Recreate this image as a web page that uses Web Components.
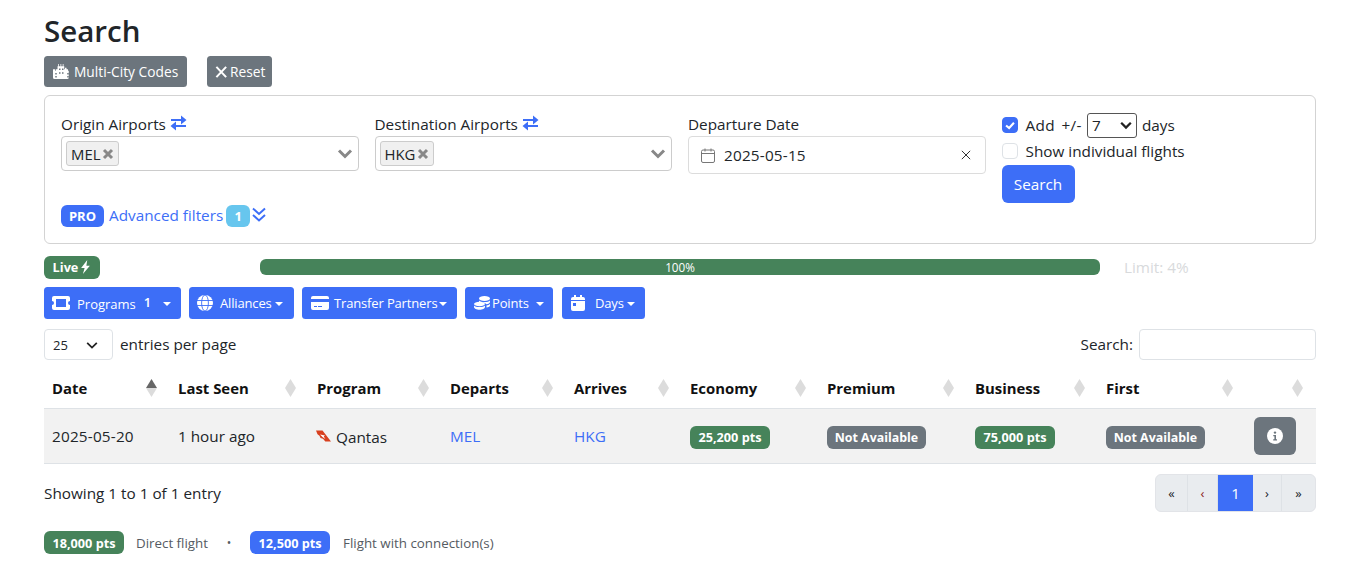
<!DOCTYPE html>
<html><head><meta charset="utf-8">
<style>
html,body{margin:0;padding:0;background:#fff}
body{font:15.3px/24px "Open Sans","Noto Sans",sans-serif;color:#212529}
</style></head>
<body>
<search-page></search-page>
<script>
const I={
city:'<svg viewBox="0 0 24 20" width="18" height="15" fill="currentColor"><path d="M0 7h3v2h1V7h2V3h1V0h1v3h2V0h1v3h2V0h1v3h1v4h1V5h2v2h2v2h1v9a2 2 0 0 1-2 2H2a2 2 0 0 1-2-2z"/><path fill="#6c757d" d="M8 6h2v2H8zM12 6h2v2h-2zM8 11h2v2H8zM12 11h2v2h-2zM3 12h2v2H3zM3 16h2v2H3zM19 12h2v2h-2zM19 16h2v2h-2z"/></svg>',
x:'<svg viewBox="0 0 14 14" width="13" height="14" fill="none" stroke="currentColor" stroke-width="2.2"><path d="M1.500 1.500 12 12.500M12 1.500 1.500 12.500"/></svg>',
swap:'<svg viewBox="0 0 17 16" width="17" height="16" fill="currentColor"><path d="M1 4h11v2H1zM5 10h11v2H5z"/><path d="M11 0.500 16.500 5 11 9.500zM6 6.500.5 11 6 15.500z"/></svg>',
down:'<svg viewBox="0 0 16 16" width="16" height="16" fill="none" stroke="currentColor" stroke-width="2"><path d="M2 1.500 8 7l6-5.500M2 8 8 13.500 14 8"/></svg>',
bolt:'<svg viewBox="0 0 12 16" width="11" height="14" fill="currentColor"><path d="M8 0 1 9h4l-2 7 8-9.500H7z"/></svg>',
ticket:'<svg viewBox="0 0 18 14" width="18" height="14" fill="currentColor"><path fill-rule="evenodd" d="M2 0h14a2 2 0 0 1 2 2v3a2 2 0 0 0 0 4v3a2 2 0 0 1-2 2H2a2 2 0 0 1-2-2V9a2 2 0 0 0 0-4V2a2 2 0 0 1 2-2zm2 3v8h10V3z"/></svg>',
globe:'<svg viewBox="0 0 16 16" width="16" height="16" fill="none"><circle cx="8" cy="8" r="8" fill="currentColor"/><g stroke="#3d6ef7" stroke-width=".9"><ellipse cx="8" cy="8" rx="3.400" ry="8"/><path d="M0 5.500h16M0 10.500h16"/></g></svg>',
card:'<svg viewBox="0 0 18 14" width="18" height="14" fill="currentColor"><path d="M2 0h14a2 2 0 0 1 2 2v1H0V2a2 2 0 0 1 2-2zM0 6h18v6a2 2 0 0 1-2 2H2a2 2 0 0 1-2-2zm3 4v1h3v-1zm4 0v1h4v-1z" fill-rule="evenodd"/></svg>',
coins:'<svg viewBox="0 0 16 14" width="16" height="14" fill="currentColor"><ellipse cx="10.500" cy="2.500" rx="5.500" ry="2.500"/><path d="M5 4.500c1 1 3 1.500 5.500 1.500S15 5.500 16 4.500V6c0 1-1.500 2-3.500 2.300C11.500 7 9 6.300 7 6.300c-.7 0-1.400.1-2 .2z"/><ellipse cx="5.500" cy="8" rx="5.500" ry="2.200"/><path d="M0 9.500c1 1 3 1.500 5.500 1.500S10 10.500 11 9.500V11c0 1.500-2.500 2.800-5.500 2.800S0 12.500 0 11z"/><path d="M12.500 9.500c1.500-.3 2.700-.8 3.500-1.500v1.500c0 1-1.300 1.800-3.500 2.100z"/></svg>',
cal:'<svg viewBox="0 0 14 16" width="14" height="16" fill="currentColor"><path fill-rule="evenodd" d="M3 0h2v2h4V0h2v2h1a2 2 0 0 1 2 2v1H0V4a2 2 0 0 1 2-2h1zM0 6h14v8a2 2 0 0 1-2 2H2a2 2 0 0 1-2-2zm2 2v3h3V8z"/></svg>',
info:'<svg viewBox="0 0 16 16" width="16" height="16"><circle cx="8" cy="8" r="8" fill="#fff"/><circle cx="8" cy="4.600" r="1.200" fill="#6c757d"/><path d="M6.300 7h2.700v4.200h1v1.300H6.200v-1.300h1.200V8.300H6.300z" fill="#6c757d"/></svg>',
chev:'<svg viewBox="0 0 16 12" width="16" height="12" fill="none" stroke="#888" stroke-width="3"><path d="M2 2.500 8 8.500l6-6"/></svg>',
calo:'<svg viewBox="0 0 14 15" width="14" height="15" fill="none" stroke="#777" stroke-width="1"><rect x=".5" y="2" width="13" height="12.500" rx="1.500"/><path d="M.5 5.500h13M4 .5v3M10 .5v3"/></svg>',
qantas:'<svg viewBox="0 0 15 12" width="15" height="12"><path d="M0 0.500h6.500L15 11.500H9.300L7 8.800 4.500 8 3.500 5.800 1.500 4.300z" fill="#d8401f"/><path d="M4 4.500 9 5.500 7.800 6.500 9.300 9 6.500 7z" fill="#fff"/></svg>'
};
function def(name,css,html){
  customElements.define(name,class extends HTMLElement{
    constructor(){super();const r=this.attachShadow({mode:'open'});
      r.innerHTML='<style>'+css+'</style>'+(typeof html==='function'?html(this):html);}
  });
}
def('x-btn',`:host{display:inline-flex;align-items:center;box-sizing:border-box;height:var(--h,32px);padding:0 0 0 var(--px,9px);gap:var(--g,5px);border-radius:3.500px;background:var(--bg,#3d6ef7);color:#fff;font-size:var(--fs,13.750px);letter-spacing:var(--ls,0);white-space:nowrap;flex:none}
svg{display:block;flex:none}`,el=>(I[el.getAttribute('icon')]||'')+'<slot></slot>');
def('x-caret',`:host{display:inline-block;width:0;height:0;border:4px solid transparent;border-top:4.500px solid #fff;border-bottom:0;margin-top:1px;flex:none}`,'');
def('x-badge',`:host{display:inline-flex;align-items:center;justify-content:center;box-sizing:border-box;height:23px;width:var(--w,80px);border-radius:6px;background:var(--bg,#46835a);color:#fff;font-size:12.700px;font-weight:700;white-space:nowrap}`,'<slot></slot>');
def('x-tagselect',`:host{display:flex;align-items:center;justify-content:space-between;box-sizing:border-box;height:35px;border:1px solid #ccc;border-radius:4px;padding:0 5px 0 4px;background:#fff}
.t{display:inline-flex;align-items:center;gap:2px;height:25px;box-sizing:border-box;padding:0 4px;border:1px solid #ccc;border-radius:3px;background:#f0f0f0;font-size:14.900px;color:#212529}
.t svg{color:#888;flex:none}`,el=>`<span class="t"><slot></slot><svg viewBox="0 0 12 12" width="12" height="12" fill="none" stroke="currentColor" stroke-width="3"><path d="M2 2l8 8M10 2l-8 8"/></svg></span>${I.chev}`);
def('x-check',`:host{display:flex;align-items:center;gap:7px;height:24px;white-space:nowrap}
.b{width:16px;height:16px;box-sizing:border-box;border-radius:4px;border:1px solid #dee2e6;background:#fff;display:flex;align-items:center;justify-content:center;flex:none;margin-right:1px}
.b svg{display:block}
.t{display:inline-flex;align-items:center;gap:5px}
:host([on]) .b{background:#3d6ef7;border-color:#3d6ef7}`,el=>`<span class="b">${el.hasAttribute('on')?'<svg viewBox="0 0 16 16" width="14" height="14" fill="none" stroke="#fff" stroke-width="2.400"><path d="M3.500 8.500 7 11.500l5.500-6"/></svg>':''}</span><span class="t"><slot></slot></span>`);
def('x-native',`:host{display:inline-flex;align-items:center;justify-content:space-between;box-sizing:border-box;border:var(--b,1px solid #dee2e6);border-radius:var(--r,4px);background:#fff;color:#212529}
svg{display:block;flex:none;width:14px;height:14px}`,'<slot></slot><svg viewBox="0 0 16 16" fill="none" stroke="#222" stroke-width="var(--sw,2)"><path d="M2.500 5.500 8 11l5.500-5.500"/></svg>');
def('search-card',`:host{display:block;box-sizing:border-box;height:149px;border:1px solid #d3d3d3;border-radius:6px;padding:16px 16px 0;margin-top:8px}
.g{display:grid;grid-template-columns:repeat(4,1fr);gap:16px;height:92px}
.l{display:flex;align-items:center;gap:4px;height:24px;white-space:nowrap}
.l svg{color:#3d6ef7;display:block;margin-top:-3px;flex:none}
.d{display:flex;align-items:center;box-sizing:border-box;height:38px;border:1px solid #dcdcdc;border-radius:4px;padding:0 12px;gap:9px;color:#212529}
.d .v{flex:1;letter-spacing:.2px}.d svg{display:block;flex:none}
.go{display:flex;align-items:center;justify-content:center;width:73px;height:38px;border-radius:6px;background:#3d6ef7;color:#fff;margin-top:2px}
.ck{padding-top:1px}
.ws{letter-spacing:.4px;word-spacing:2px}
.adv{display:flex;align-items:center;gap:5px;color:#3d6ef7;height:24px}
.pro{display:inline-flex;align-items:center;justify-content:center;width:43px;height:22px;border-radius:6px;background:#3d6ef7;color:#fff;font-size:13px;font-weight:700}
.n{display:inline-flex;align-items:center;justify-content:center;width:24px;height:22px;border-radius:6px;background:#67c6ee;color:#fff;font-size:13px;font-weight:700;margin:0 -4px 0 -2px}
.adv svg{display:block;margin-top:-2px;flex:none}
.adv .tx{margin-top:-2px}
`,`<div class="g">
<div><div class="l">Origin Airports ${I.swap}</div><x-tagselect>MEL</x-tagselect></div>
<div><div class="l">Destination Airports ${I.swap}</div><x-tagselect>HKG</x-tagselect></div>
<div><div class="l">Departure Date</div><div class="d">${I.calo}<span class="v">2025-05-15</span><svg viewBox="0 0 12 12" width="10" height="10" fill="none" stroke="#333" stroke-width="1.200" style="margin-right:2px"><path d="M1 1l10 10M11 1 1 11"/></svg></div></div>
<div class="ck"><x-check on><span class="ws">Add +/-</span><x-native style="width:50px;height:25px;--b:1px solid #555;--r:3px;padding:0 3px 0 4px;--sw:2.600">7</x-native><span>days</span></x-check><div style="height:2px"></div><x-check>Show individual flights</x-check><div class="go">Search</div></div>
</div>
<div class="adv"><span class="pro">PRO</span><span class="tx">Advanced filters</span><span class="n">1</span>${I.down}</div>`);
def('status-row',`:host{display:grid;grid-template-columns:192px 840px 1fr;grid-template-rows:23px;column-gap:24px;margin-top:12px;height:23px}
.w{display:flex}
.live{display:inline-flex;align-items:center;justify-content:center;gap:2px;width:56px;height:23px;box-sizing:border-box;padding-bottom:1px;border-radius:6px;background:#46835a;color:#fff;font-size:12.700px;font-weight:700}
.p{height:16px;margin-top:3px;border-radius:6px;background:#46835a;color:#fff;font-size:11.700px;line-height:17px;text-align:center}
.m{color:#d8dadc;font-size:15.300px;line-height:23px}`,`<div class="w"><span class="live">Live ${I.bolt}</span></div><div class="p">100%</div><div class="m">Limit: 4%</div>`);
def('filter-row',`:host{display:flex;gap:8px;margin-top:8px;--fs:13px}
.s{--ls:-.15px}`,`
<x-btn icon="ticket" style="width:137px;--g:0;--px:8px"><span style="margin-left:7px;margin-top:2px">Programs</span><b style="font-weight:600;margin:-2px 12px 0 8px">1</b><x-caret></x-caret></x-btn>
<x-btn class="s" icon="globe" style="width:105px;--px:8px;--g:7px">Alliances<x-caret style="margin-left:-4px"></x-caret></x-btn>
<x-btn class="s" icon="card" style="width:155px;--g:5px">Transfer Partners<x-caret style="margin-left:-3px"></x-caret></x-btn>
<x-btn class="s" icon="coins" style="width:88px;--g:2px">Points<x-caret style="margin-left:5px"></x-caret></x-btn>
<x-btn class="s" icon="cal" style="width:83px;margin-left:1px;--g:10px">Days<x-caret style="margin-left:-7px"></x-caret></x-btn>`);
def('len-row',`:host{display:flex;justify-content:space-between;align-items:center;margin-top:10px;height:31px}
.a{display:flex;align-items:center;gap:7px}.b{display:flex;align-items:center;gap:6px}
.i{display:block;width:177px;height:31px;box-sizing:border-box;border:1px solid #dee2e6;border-radius:4px}
.t{margin-top:-2px}
x-native{width:69px;height:31px;padding:0 13px 0 8px;font-size:13px}`,`<div class="a"><x-native>25</x-native><span class="t">entries per page</span></div><div class="b"><span class="t">Search:</span><span class="i"></span></div>`);
const cols=[['Date',126],['Last Seen',139],['Program',133],['Departs',124],['Arrives',116],['Economy',137],['Premium',148],['Business',131],['First',148],['',70]];
def('flight-table',`:host{display:block;margin-top:9px}
table{border-collapse:collapse;table-layout:fixed;width:1272px}
th{height:37px;padding:0 8px 2px;text-align:left;font-weight:700;position:relative;border-bottom:1px solid #dee2e6;font-size:14.900px;color:#111}
td{height:54px;padding:0 8px;background:#f2f2f2;border-bottom:1px solid #dee2e6;white-space:nowrap;font-size:15.300px}
.dt{letter-spacing:.2px}
th svg{position:absolute;right:13.500px;top:10px;display:block}
a{color:#3d6ef7;text-decoration:none}
.q{display:flex;align-items:center;gap:5px;margin-left:-1px}.q svg{display:block;flex:none}
.q .t{margin-top:2px}
.bd{display:flex;margin-top:2px}
.na{--bg:#6c757d;--w:99px;font-size:12.400px;padding-top:1px}
.inf{display:flex;align-items:center;justify-content:center;width:42px;height:38px;border-radius:6px;background:#6c757d}`,()=>`<table><colgroup>${cols.map(c=>`<col style="width:${c[1]}px">`).join('')}</colgroup><thead><tr>${cols.map((c,i)=>`<th>${c[0]}<svg viewBox="0 0 11 18" width="11" height="18"><path d="M5.500 0 11 9H0z" fill="${i?'#dcdcdc':'#666'}"/><path d="M5.500 18 11 9H0z" fill="#dcdcdc"/></svg></th>`).join('')}</tr></thead>
<tbody><tr><td><span class="dt">2025-05-20</span></td><td>1 hour ago</td><td><div class="q">${I.qantas}<span class="t">Qantas</span></div></td><td><a>MEL</a></td><td><a>HKG</a></td><td><div class="bd"><x-badge>25,200 pts</x-badge></div></td><td><div class="bd"><x-badge class="na">Not Available</x-badge></div></td><td><div class="bd"><x-badge>75,000 pts</x-badge></div></td><td><div class="bd"><x-badge class="na">Not Available</x-badge></div></td><td><span class="inf">${I.info}</span></td></tr></tbody></table>`);
def('pager-row',`:host{display:flex;justify-content:space-between;align-items:center;height:38px;margin-top:10px}
.p{display:flex;border:1px solid #e2e4e8;border-radius:6px;overflow:hidden;height:38px;box-sizing:border-box;background:#e9ecef;font-size:13px}
.p span{display:flex;align-items:center;justify-content:center;border-right:1px solid #dee2e6;box-sizing:border-box;color:#212529}
.p .a{background:#3d6ef7;color:#fff;font-size:15px;border:0}`,`<span>Showing 1 to 1 of 1 entry</span><div class="p"><span style="width:32px">«</span><span style="width:30px;color:#8b1a1a">‹</span><span class="a" style="width:35px">1</span><span style="width:29px">›</span><span style="width:33px;border:0">»</span></div>`);
def('legend-row',`:host{display:flex;align-items:center;height:23px;margin-top:19px;font-size:13.350px;color:#555b62}`,`<x-badge>18,000 pts</x-badge><span style="margin-left:12px">Direct flight</span><span style="width:42px;text-align:center;font-size:12px">•</span><x-badge style="--bg:#3d6ef7">12,500 pts</x-badge><span style="margin-left:13px">Flight with connection(s)</span>`);
def('search-page',`:host{display:block;box-sizing:border-box;width:1345px;padding:0 29px 0 44px}
h1{margin:0;font-size:29.500px;line-height:61px;font-weight:600;color:#212529;height:56px}
.top{display:flex;gap:20px}`,`<h1>Search</h1>
<div class="top"><x-btn icon="city" style="--bg:#6c757d;--h:31px;width:143px;--px:9px;--g:3px">Multi-City Codes</x-btn><x-btn icon="x" style="--bg:#6c757d;--h:31px;width:65px;--px:8px;--g:2px">Reset</x-btn></div>
<search-card></search-card><status-row></status-row><filter-row></filter-row><len-row></len-row><flight-table></flight-table><pager-row></pager-row><legend-row></legend-row>`);
</script>
</body></html>
